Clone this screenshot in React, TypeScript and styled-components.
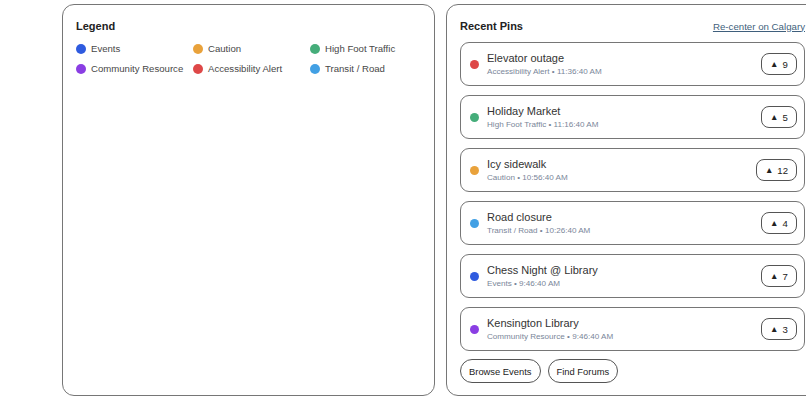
import React from "react";
import styled, { createGlobalStyle } from "styled-components";

const Global = createGlobalStyle`
  html, body { margin: 0; padding: 0; background: #ffffff; }
  body { font-family: "Liberation Sans", Arial, sans-serif; overflow: hidden; }
  * { box-sizing: border-box; }
`;

const Page = styled.div`
  display: grid;
  grid-template-columns: 373px 373px;
  gap: 11px;
  padding: 4px 0 0 62px;
  width: 900px;
`;

const Panel = styled.section`
  height: 392px;
  border: 1px solid #767676;
  border-radius: 12px;
  padding: 14px 13px 12px 13px;
  display: flex;
  flex-direction: column;
  background: #fff;
`;

const Title = styled.h2`
  margin: 0;
  font-size: 11px;
  line-height: 14px;
  font-weight: 700;
  color: #222;
`;

const LegendGrid = styled.div`
  display: grid;
  grid-template-columns: repeat(3, 117px);
  row-gap: 6px;
  margin-top: 9px;
`;

const LegendItem = styled.div`
  display: flex;
  align-items: center;
  gap: 5px;
  font-size: 9.6px;
  line-height: 14px;
  color: #474747;
  white-space: nowrap;
`;

const Dot = styled.span<{ $c: string; $s?: number }>`
  width: ${(p) => p.$s ?? 10}px;
  height: ${(p) => p.$s ?? 10}px;
  border-radius: 50%;
  background: ${(p) => p.$c};
  flex: none;
`;

const Header = styled.div`
  display: flex;
  align-items: center;
  justify-content: space-between;
`;

const Link = styled.a`
  font-size: 9.7px;
  color: #3f5f7c;
  text-decoration: underline;
  cursor: pointer;
`;

const List = styled.div`
  display: flex;
  flex-direction: column;
  gap: 9px;
  margin-top: 9px;
`;

const Card = styled.div`
  height: 44px;
  border: 1px solid #767676;
  border-radius: 9px;
  display: flex;
  align-items: center;
  padding: 0 7px 0 9px;
  gap: 8px;
`;

const Info = styled.div`
  flex: 1;
  display: flex;
  flex-direction: column;
  gap: 1px;
`;

const PinTitle = styled.div`
  font-size: 11px;
  line-height: 14px;
  color: #333;
`;

const Sub = styled.div`
  font-size: 8.1px;
  line-height: 11px;
  color: #7a8699;
`;

const Vote = styled.button`
  height: 22px;
  min-width: 36px;
  padding: 0 8px;
  border: 1px solid #555;
  border-radius: 8px;
  background: #fff;
  font-family: inherit;
  font-size: 9.6px;
  color: #222;
  display: flex;
  align-items: center;
  justify-content: center;
  gap: 4px;
`;

const Tri = styled.span`
  font-size: 8.5px;
`;

const Actions = styled.div`
  display: flex;
  gap: 7px;
  margin-top: 8px;
`;

const Pill = styled.button`
  height: 24px;
  padding: 0 8px;
  border: 1px solid #555;
  border-radius: 12px;
  background: #fff;
  font-family: inherit;
  font-size: 9.4px;
  color: #222;
`;

const COLORS = {
  events: "#2f5bdf",
  caution: "#e9a23b",
  foot: "#45ad7a",
  community: "#8a3ee3",
  access: "#de4848",
  transit: "#42a0e4",
};

const legend = [
  { label: "Events", c: COLORS.events },
  { label: "Caution", c: COLORS.caution },
  { label: "High Foot Traffic", c: COLORS.foot },
  { label: "Community Resource", c: COLORS.community },
  { label: "Accessibility Alert", c: COLORS.access },
  { label: "Transit / Road", c: COLORS.transit },
];

const pins = [
  { title: "Elevator outage", cat: "Accessibility Alert", time: "11:36:40 AM", c: COLORS.access, votes: 9 },
  { title: "Holiday Market", cat: "High Foot Traffic", time: "11:16:40 AM", c: COLORS.foot, votes: 5 },
  { title: "Icy sidewalk", cat: "Caution", time: "10:56:40 AM", c: COLORS.caution, votes: 12 },
  { title: "Road closure", cat: "Transit / Road", time: "10:26:40 AM", c: COLORS.transit, votes: 4 },
  { title: "Chess Night @ Library", cat: "Events", time: "9:46:40 AM", c: COLORS.events, votes: 7 },
  { title: "Kensington Library", cat: "Community Resource", time: "9:46:40 AM", c: COLORS.community, votes: 3 },
];

export default function App() {
  return (
    <>
      <Global />
      <Page>
        <Panel>
          <Title>Legend</Title>
          <LegendGrid>
            {legend.map((l) => (
              <LegendItem key={l.label}>
                <Dot $c={l.c} />
                {l.label}
              </LegendItem>
            ))}
          </LegendGrid>
        </Panel>
        <Panel>
          <Header>
            <Title>Recent Pins</Title>
            <Link>Re-center on Calgary</Link>
          </Header>
          <List>
            {pins.map((p) => (
              <Card key={p.title}>
                <Dot $c={p.c} $s={9} />
                <Info>
                  <PinTitle>{p.title}</PinTitle>
                  <Sub>
                    {p.cat} • {p.time}
                  </Sub>
                </Info>
                <Vote>
                  <Tri>▲</Tri>
                  {p.votes}
                </Vote>
              </Card>
            ))}
          </List>
          <Actions>
            <Pill>Browse Events</Pill>
            <Pill>Find Forums</Pill>
          </Actions>
        </Panel>
      </Page>
    </>
  );
}
